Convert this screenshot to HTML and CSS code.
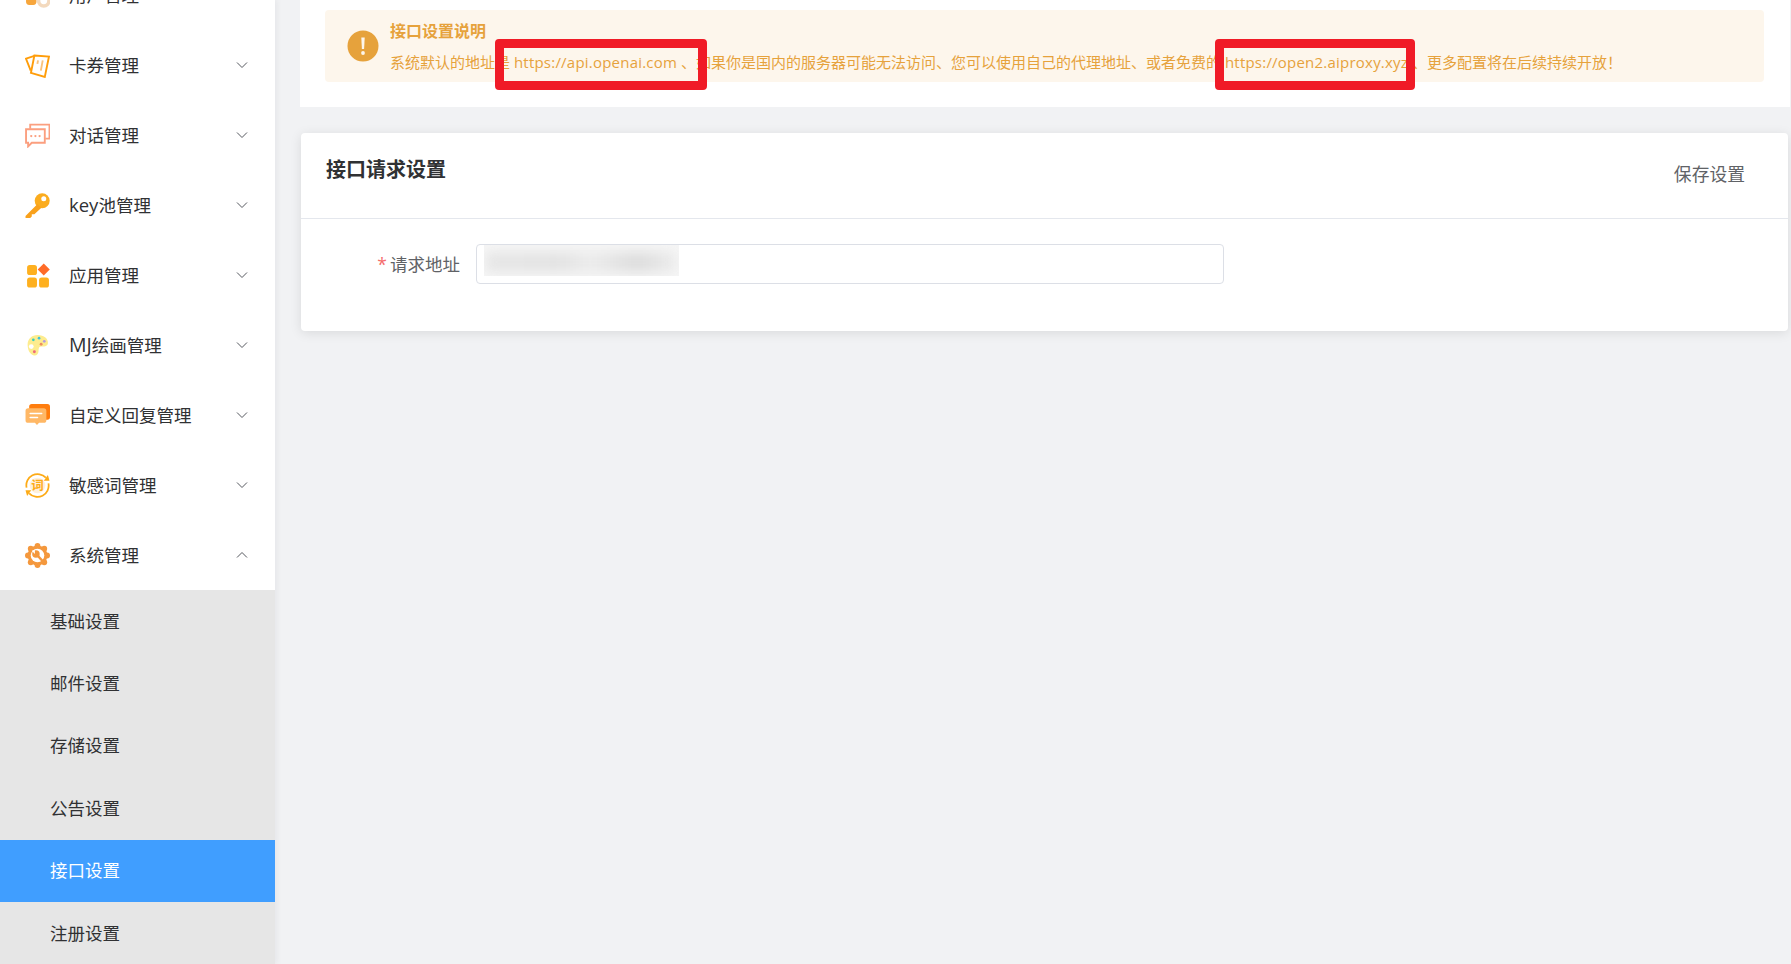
FILE: index.html
```html
<!DOCTYPE html>
<html lang="zh-CN">
<head>
<meta charset="utf-8">
<title>接口设置</title>
<link rel="stylesheet" href="styles.css">
</head>
<body>
<div class="app">
  <aside class="sidebar">
    <nav class="menu">
      <div class="row">
        <svg class="ico" viewBox="0 0 24 24"><rect x="1" y="3" width="10" height="18" rx="3" fill="#f7a63c"/><circle cx="18" cy="17" r="5" fill="none" stroke="#f3d9bd" stroke-width="3.4"/></svg>
        <span class="label">用户管理</span>
        <svg class="chev" viewBox="0 0 12 12"><path d="M1 3.500l5 5 5-5"/></svg>
      </div>
      <div class="row">
        <svg class="ico" viewBox="0 0 24 24"><path d="M9 2.400l14 1-4 19.600-13.300-4z" fill="none" stroke="#ff9d0a" stroke-width="1.800"/><path d="M9 2.800L1 5.500 5.500 17" fill="none" stroke="#ff9d0a" stroke-width="1.800"/><path d="M12.500 7l-.6 3.500M17 7l-1.800 10" fill="none" stroke="#f9c27d" stroke-width="1.800"/></svg>
        <span class="label">卡券管理</span>
        <svg class="chev" viewBox="0 0 12 12"><path d="M1 3.500l5 5 5-5"/></svg>
      </div>
      <div class="row">
        <svg class="ico" viewBox="0 0 24 24"><path d="M1 6h18v13H6.500l-3.500 3.500V19H1z" fill="none" stroke="#fb9f7f" stroke-width="1.800"/><path d="M5 5.500V1.500h18.500V15H19.500" fill="none" stroke="#fb9f7f" stroke-width="1.800"/><circle cx="6" cy="12.500" r="1.100" fill="#fb9f7f"/><circle cx="10" cy="12.500" r="1.100" fill="#fb9f7f"/><circle cx="14" cy="12.500" r="1.100" fill="#fb9f7f"/></svg>
        <span class="label">对话管理</span>
        <svg class="chev" viewBox="0 0 12 12"><path d="M1 3.500l5 5 5-5"/></svg>
      </div>
      <div class="row">
        <svg class="ico" viewBox="0 0 24 24"><circle cx="16.500" cy="7.500" r="7.200" fill="#fbac1e"/><path d="M12 10.500L0.500 22v2h4.500l1.500-1.500V20.500h2.500l6.500-6z" fill="#f9a11b"/><circle cx="18" cy="5.500" r="2.400" fill="#fff"/></svg>
        <span class="label"><span class="latin">key</span>池管理</span>
        <svg class="chev" viewBox="0 0 12 12"><path d="M1 3.500l5 5 5-5"/></svg>
      </div>
      <div class="row">
        <svg class="ico" viewBox="0 0 24 24"><rect x="2" y="2" width="9.500" height="9.500" rx="2.500" fill="#feb01f"/><rect x="2" y="14" width="9.500" height="9.500" rx="2.500" fill="#feb01f"/><rect x="13.500" y="14" width="9.500" height="9.500" rx="2.500" fill="#feb01f"/><path d="M18 .5l5.800 5.800-5.800 5.800-5.800-5.800z" fill="#ff6b28"/></svg>
        <span class="label">应用管理</span>
        <svg class="chev" viewBox="0 0 12 12"><path d="M1 3.500l5 5 5-5"/></svg>
      </div>
      <div class="row">
        <svg class="ico" viewBox="0 0 24 24"><path d="M12 2c6.500 0 10.500 4 10 8-.4 3-4 3-6.500 3-2.200 0-2.500 2-2.500 4 0 3-2 5-4.500 4.500C4 20.500 2.500 15 2.500 11 2.500 6 6.500 2 12 2z" fill="#fdec8e"/><circle cx="6" cy="13" r="2.300" fill="#fff"/><circle cx="8" cy="6.500" r="1.300" fill="#38d0c0"/><circle cx="13.500" cy="5" r="1.300" fill="#3cc4dd"/><circle cx="18.500" cy="8" r="1.300" fill="#b49ae0"/><circle cx="15.500" cy="10.800" r="1.400" fill="#ee8f60"/><circle cx="9" cy="18" r="1.400" fill="#ef6a7d"/></svg>
        <span class="label"><span class="latin-mj">MJ</span>绘画管理</span>
        <svg class="chev" viewBox="0 0 12 12"><path d="M1 3.500l5 5 5-5"/></svg>
      </div>
      <div class="row">
        <svg class="ico" viewBox="0 0 24 24"><rect x="4" y="1" width="20" height="15" rx="2.500" fill="#ff7d0d"/><path d="M3 5h15a2.500 2.500 0 0 1 2.500 2.500v9A2.500 2.500 0 0 1 18 19h-4.500l-2 2-2-2H3A2.500 2.500 0 0 1 .5 16.500v-9A2.500 2.500 0 0 1 3 5z" fill="#ffb866"/><path d="M5 10h11M5 14h7" stroke="#fff" stroke-width="1.500" stroke-linecap="round"/></svg>
        <span class="label">自定义回复管理</span>
        <svg class="chev" viewBox="0 0 12 12"><path d="M1 3.500l5 5 5-5"/></svg>
      </div>
      <div class="row">
        <svg class="ico" viewBox="0 0 24 24"><circle cx="12" cy="12" r="7.500" fill="#fff0da"/><path d="M1.500 14A10.800 10.800 0 0 1 20 4.500M22.500 10A10.800 10.800 0 0 1 4 19.500" fill="none" stroke="#fdab17" stroke-width="1.700"/><path d="M18 7.500h5.500l-1.500-5.500zM6 16.500H.5l1.500 5.500z" fill="#fdab17"/><text x="12" y="16.500" class="ciword">词</text></svg>
        <span class="label">敏感词管理</span>
        <svg class="chev" viewBox="0 0 12 12"><path d="M1 3.500l5 5 5-5"/></svg>
      </div>
      <div class="row">
        <svg class="ico" viewBox="0 0 24 24"><g fill="#f4983d"><circle cx="12" cy="2.800" r="2.800"/><circle cx="12" cy="21.200" r="2.800"/><circle cx="2.800" cy="12" r="2.800"/><circle cx="21.200" cy="12" r="2.800"/><circle cx="5.500" cy="5.500" r="2.800"/><circle cx="18.500" cy="5.500" r="2.800"/><circle cx="5.500" cy="18.500" r="2.800"/><circle cx="18.500" cy="18.500" r="2.800"/><circle cx="12" cy="12" r="9.500"/></g><circle cx="12" cy="12" r="6.500" fill="#fff"/><circle cx="10.500" cy="10.500" r="3.600" fill="#f4983d"/><path d="M9.500 6.500l-3 1 3 3z" fill="#fff"/><path d="M12 12l7 7.500" stroke="#f4983d" stroke-width="2.400"/></svg>
        <span class="label">系统管理</span>
        <svg class="chev" viewBox="0 0 12 12"><path d="M1 8.500l5-5 5 5"/></svg>
      </div>
      <div class="submenu">
        <div class="subrow">基础设置</div>
        <div class="subrow">邮件设置</div>
        <div class="subrow">存储设置</div>
        <div class="subrow">公告设置</div>
        <div class="subrow active">接口设置</div>
        <div class="subrow">注册设置</div>
      </div>
    </nav>
  </aside>
  <main class="main">
    <section class="intro">
      <div class="alert">
        <svg class="alert-ico" viewBox="0 0 32 32"><circle cx="16" cy="16" r="15.500" fill="#e6a23c"/><path d="M14.300 7.500h3.400l-.6 11.500h-2.200z" fill="#fdf6ec"/><circle cx="16" cy="23" r="1.900" fill="#fdf6ec"/></svg>
        <div class="alert-body">
          <div class="alert-title">接口设置说明</div>
          <div class="alert-desc">系统默认的地址是 <span class="url">https://api.openai.com</span> 、如果你是国内的服务器可能无法访问、您可以使用自己的代理地址、或者免费的 <span class="url">https://open2.aiproxy.xyz</span> 、更多配置将在后续持续开放！</div>
        </div>
        <div class="mark mark-a"></div>
        <div class="mark mark-b"></div>
      </div>
    </section>
    <section class="card">
      <header class="card-head">
        <h2 class="card-title">接口请求设置</h2>
        <span class="card-action">保存设置</span>
      </header>
      <div class="card-body">
        <div class="field-label"><span class="req">*</span>请求地址</div>
        <div class="input">
          <div class="blur"><div class="blur-in"></div></div>
        </div>
      </div>
    </section>
  </main>
</div>
</body>
</html>
```

FILE: styles.css
```css
html, body {
  margin: 0;
  padding: 0;
  height: 100%;
  overflow: hidden;
}
body {
  background: #f1f2f4;
  font-family: "Open Sans", "Noto Sans CJK SC", sans-serif;
  color: #303133;
}
.app {
  display: flex;
  height: 964px;
  overflow: hidden;
}
.sidebar {
  width: 275px;
  flex: none;
  background: #fff;
  box-shadow: 2px 0 6px rgba(0, 21, 41, .05);
  overflow: hidden;
  position: relative;
}
.menu {
  margin-top: -40px;
}
.row {
  height: 70px;
  display: flex;
  align-items: center;
  padding: 0 27px 0 25px;
  font-size: 17.5px;
}
.ico {
  width: 25px;
  height: 25px;
  flex: none;
  margin-right: 19px;
}
.ciword {
  font-size: 12px;
  font-weight: 700;
  fill: #fdab17;
  text-anchor: middle;
}
.label {
  flex: 1;
  padding-bottom: 2px;
}
.latin {
  font-size: 18.5px;
}
.latin-mj {
  font-size: 19.5px;
}
.chev {
  width: 12px;
  height: 12px;
  flex: none;
  fill: none;
  stroke: #55585e;
  stroke-width: 1;
}
.submenu {
  background: #e6e6e6;
}
.subrow {
  height: 62.4px;
  box-sizing: border-box;
  display: flex;
  align-items: center;
  padding: 0 0 2px 50px;
  font-size: 17.5px;
}
.subrow.active {
  background: #409eff;
  color: #fff;
}
.main {
  flex: 1;
  min-width: 0;
  padding: 0 3px 0 25px;
}
.intro {
  background: #fff;
  margin-right: -2px;
  padding: 10px 26px 25px 25px;
}
.alert {
  position: relative;
  display: flex;
  align-items: center;
  height: 72px;
  box-sizing: border-box;
  padding: 0 0 0 22px;
  background: #fdf6ec;
  border-radius: 4px;
  color: #e6a23c;
}
.alert-ico {
  width: 32px;
  height: 32px;
  flex: none;
  margin-right: 11px;
}
.alert-body {
  flex: 1;
  min-width: 0;
}
.alert-title {
  font-size: 16px;
  font-weight: 700;
  line-height: 24px;
}
.alert-desc {
  font-size: 15px;
  line-height: 24px;
  margin-top: 7px;
  white-space: nowrap;
}
.url {
  letter-spacing: .22px;
}
.mark {
  position: absolute;
  box-sizing: border-box;
  border: 9px solid #f01b27;
  border-radius: 4px;
  top: 29px;
  height: 51px;
}
.mark-a {
  left: 170px;
  width: 212px;
}
.mark-b {
  left: 890px;
  width: 200px;
}
.card {
  margin: 26px 0 0 1px;
  height: 198px;
  background: #fff;
  border-radius: 4px;
  box-shadow: 0 2px 12px rgba(0, 0, 0, .1);
}
.card-head {
  height: 85px;
  border-bottom: 1px solid #e4e7ed;
  display: flex;
  justify-content: space-between;
  padding: 0 43px 0 25px;
}
.card-title {
  margin: 23px 0 0;
  font-size: 20px;
  line-height: 28px;
  font-weight: 700;
  color: #303133;
}
.card-action {
  margin-top: 26px;
  font-size: 17.8px;
  line-height: 30px;
  color: #606266;
}
.card-body {
  display: flex;
  align-items: center;
  padding: 25px 0 0 0;
}
.field-label {
  width: 159px;
  box-sizing: border-box;
  text-align: right;
  font-size: 17.5px;
  line-height: 24px;
  padding-bottom: 1px;
  color: #606266;
}
.req {
  color: #f56c6c;
  margin-right: 3px;
}
.input {
  width: 748px;
  height: 40px;
  box-sizing: border-box;
  border: 1px solid #dcdfe6;
  border-radius: 4px;
  margin-left: 16px;
  padding: 0 0 0 7px;
}
.blur {
  width: 195px;
  height: 31px;
  overflow: hidden;
  background: #f6f6f6;
}
.blur-in {
  width: 190px;
  height: 20px;
  margin: 7px 0 0 2px;
  background: linear-gradient(90deg, #e6e6e6 0, #e3e3e3 40%, #ececec 55%, #dcdcdc 80%, #ececec 100%);
  filter: blur(6px);
}
```
